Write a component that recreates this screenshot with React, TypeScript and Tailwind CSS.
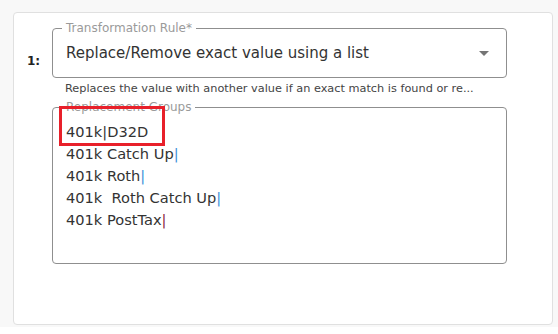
import { useState } from "react";

const groups = [
  { name: "401k", code: "D32D", pipe: "text-[#333]" },
  { name: "401k Catch Up", code: "", pipe: "text-[#3b8fd9]" },
  { name: "401k Roth", code: "", pipe: "text-[#3b8fd9]" },
  { name: "401k  Roth Catch Up", code: "", pipe: "text-[#3b8fd9]" },
  { name: "401k PostTax", code: "", pipe: "text-[#8a1f3c]" },
];

export default function App() {
  const [rule] = useState("Replace/Remove exact value using a list");

  return (
    <div className="w-[558px] h-[334px] bg-white font-['DejaVu_Sans',sans-serif]">
      <div className="h-[327px] bg-[#f8f8f8] pt-[12px] pl-[13px] pr-[5px]">
        <div className="h-[313px] bg-white border border-[#e0e0e0] rounded-[4px] flex pt-[15px] pl-[13px]">
          <div className="w-[25px] shrink-0 pt-[24px] text-[12px] font-bold text-[#222]">1:</div>
          <div className="w-[455px]">
            <div className="relative h-[50px] border border-[#8f8f8f] rounded-[4px] flex items-center pl-[13px] pr-[17px]">
              <span className="absolute -top-[9px] left-[9px] bg-white px-[4px] text-[12px] text-[#9a9a9a] leading-[16px]">
                Transformation Rule*
              </span>
              <span className="flex-1 text-[15px] text-[#333]">{rule}</span>
              <svg width="10" height="5" viewBox="0 0 10 5">
                <path d="M0 0 L10 0 L5 5 Z" fill="#757575" />
              </svg>
            </div>
            <p className="mt-[3px] pl-[13px] text-[11.3px] text-[#444] leading-[16px] whitespace-nowrap">
              Replaces the value with another value if an exact match is found or re...
            </p>
            <div className="relative mt-[10px] h-[157px] border border-[#8f8f8f] rounded-[4px] pl-[13px] pt-[13px]">
              <span className="absolute -top-[9px] left-[9px] bg-white px-[4px] text-[12px] text-[#9a9a9a] leading-[16px]">
                Replacement Groups
              </span>
              {groups.map((g, i) => (
                <div key={i} className="text-[14.6px] leading-[22px] text-[#333] whitespace-pre">
                  {g.name}
                  <span className={g.pipe}>|</span>
                  {g.code}
                </div>
              ))}
              <div className="absolute top-[-2px] left-[6px] w-[106px] h-[40px] border-[3px] border-[#e8202a]" />
            </div>
          </div>
        </div>
      </div>
    </div>
  );
}
